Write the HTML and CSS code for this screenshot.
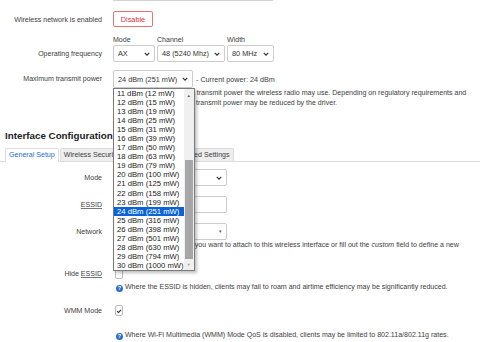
FILE: index.html
```html
<!DOCTYPE html>
<html lang="en">
<head>
    <meta charset="UTF-8">
    <title>Wireless - Device Configuration</title>
    <link rel="stylesheet" href="styles.css">
</head>
<body>

    <!-- end of the previous field -->
    <div class="prev-field"></div>

    <!-- Enabled -->
    <div class="row row-enabled">
        <label class="label">Wireless network is enabled</label>
        <div class="field">
            <button class="btn-disable">Disable</button>
        </div>
    </div>

    <!-- Operating frequency -->
    <div class="row row-freq">
        <label class="label">Operating frequency</label>
        <div class="field freq">
            <div class="freq-col">
                <span class="sub">Mode</span>
                <div class="select w-mode">AX <svg class="chev" viewBox="0 0 8 5"><path d="M1 1l3 3 3-3"/></svg></div>
            </div>
            <div class="freq-col">
                <span class="sub">Channel</span>
                <div class="select w-channel">48 (5240 Mhz) <svg class="chev" viewBox="0 0 8 5"><path d="M1 1l3 3 3-3"/></svg></div>
            </div>
            <div class="freq-col">
                <span class="sub">Width</span>
                <div class="select w-width">80 MHz <svg class="chev" viewBox="0 0 8 5"><path d="M1 1l3 3 3-3"/></svg></div>
            </div>
        </div>
    </div>

    <!-- Transmit power -->
    <div class="row row-power">
        <label class="label">Maximum transmit power</label>
        <div class="field power">
            <div class="power-line">
                <div class="select w-power">24 dBm (251 mW) <svg class="chev" viewBox="0 0 8 5"><path d="M1 1l3 3 3-3"/></svg></div>
                <span class="current">- Current power: 24 dBm</span>
            </div>
            <div class="help">
                <span class="qmark">?</span> Specifies the maximum transmit power the wireless radio may use. Depending on regulatory requirements and<br>
                wireless usage, the actual transmit power may be reduced by the driver.
            </div>

            <!-- open dropdown list -->
            <div class="dropdown">
                <ul class="options">
                    <li>11 dBm (12 mW)</li>
                    <li>12 dBm (15 mW)</li>
                    <li>13 dBm (19 mW)</li>
                    <li>14 dBm (25 mW)</li>
                    <li>15 dBm (31 mW)</li>
                    <li>16 dBm (39 mW)</li>
                    <li>17 dBm (50 mW)</li>
                    <li>18 dBm (63 mW)</li>
                    <li>19 dBm (79 mW)</li>
                    <li>20 dBm (100 mW)</li>
                    <li>21 dBm (125 mW)</li>
                    <li>22 dBm (158 mW)</li>
                    <li>23 dBm (199 mW)</li>
                    <li class="selected">24 dBm (251 mW)</li>
                    <li>25 dBm (316 mW)</li>
                    <li>26 dBm (398 mW)</li>
                    <li>27 dBm (501 mW)</li>
                    <li>28 dBm (630 mW)</li>
                    <li>29 dBm (794 mW)</li>
                    <li>30 dBm (1000 mW)</li>
                </ul>
                <div class="scrollbar">
                    <span class="arrow up">&#9650;</span>
                    <div class="thumb"></div>
                    <span class="arrow down">&#9660;</span>
                </div>
            </div>
        </div>
    </div>

    <!-- Interface Configuration -->
    <h3 class="section-title">Interface Configuration</h3>
    <ul class="tabs">
        <li class="tab active">General Setup</li>
        <li class="tab">Wireless Security</li>
        <li class="tab">MAC-Filter</li>
        <li class="tab">Advanced Settings</li>
    </ul>

    <div class="row row-mode">
        <label class="label">Mode</label>
        <div class="field">
            <div class="select w-full">Access Point <svg class="chev" viewBox="0 0 8 5"><path d="M1 1l3 3 3-3"/></svg></div>
        </div>
    </div>

    <div class="row row-essid">
        <label class="label"><abbr>ESSID</abbr></label>
        <div class="field">
            <div class="input w-full">OpenWrt</div>
        </div>
    </div>

    <div class="row row-network">
        <label class="label">Network</label>
        <div class="field">
            <div class="select w-full">lan: <span class="tri">&#9662;</span></div>
        </div>
    </div>
    <div class="help help-network">
        <span class="qmark">?</span> Choose the network(s) you want to attach to this wireless interface or fill out the <em>custom</em> field to define a new
    </div>

    <div class="row row-hide">
        <label class="label">Hide <abbr>ESSID</abbr></label>
        <div class="field">
            <span class="checkbox"></span>
        </div>
    </div>
    <div class="help help-row">
        <span class="qmark">?</span> Where the ESSID is hidden, clients may fail to roam and airtime efficiency may be significantly reduced.
    </div>

    <div class="row row-wmm">
        <label class="label">WMM Mode</label>
        <div class="field">
            <span class="checkbox checked"><svg viewBox="0 0 8 8"><path d="M1.5 4.2l1.8 1.8 3.4-3.6"/></svg></span>
        </div>
    </div>
    <div class="help help-row help-wmm">
        <span class="qmark">?</span> Where Wi-Fi Multimedia (WMM) Mode QoS is disabled, clients may be limited to 802.11a/802.11g rates.
    </div>

</body>
</html>
```

FILE: styles.css
```css
/* Reset */
* {
    margin: 0;
    padding: 0;
    box-sizing: border-box;
}

body {
    background: #fff;
    color: #333;
    font-family: 'Liberation Sans', Arial, sans-serif;
    font-size: 7.05px;
    line-height: 9px;
    overflow: hidden;
}

.prev-field {
    width: 160px;
    height: 1px;
    margin-left: 113px;
    background: #d4d4d4;
}

/* Form rows */
.row {
    display: flex;
    align-items: center;
}

.label {
    width: 102px;
    text-align: right;
    color: #404040;
    flex-shrink: 0;
}

.field {
    margin-left: 11px;
    position: relative;
}

abbr {
    text-decoration: underline;
    text-decoration-color: #777;
}

.row-enabled { margin-top: 10px; }
.row-freq { margin-top: 8px; align-items: flex-end; }
.row-freq .label { padding-bottom: 4px; }
.row-power { margin-top: 8px; align-items: flex-start; }
.row-power .label { padding-top: 4px; }
.row-mode { margin-top: 7px; }
.row-essid { margin-top: 10px; }
.row-network { margin-top: 10px; }
.row-hide { margin-top: 18px; }
.row-wmm { margin-top: 13px; }

/* Buttons and inputs */
.btn-disable {
    width: 40px;
    height: 16px;
    border: 1px solid #e57373;
    border-radius: 2px;
    background: #fff;
    color: #d9363e;
    font: inherit;
    font-size: 7.3px;
}

.freq {
    display: flex;
    gap: 2px;
}

.freq-col {
    display: flex;
    flex-direction: column;
}

.sub {
    height: 10px;
    line-height: 10px;
    color: #404040;
}

.select,
.input {
    height: 17px;
    border: 1px solid #ccc;
    border-radius: 2px;
    background: #fff;
    display: flex;
    align-items: center;
    padding: 0 4px;
    color: #333;
    font-size: 7.3px;
}

.select .chev {
    width: 6px;
    height: 4px;
    margin-left: auto;
    fill: none;
    stroke: #333;
    stroke-width: 1.6;
}

.w-mode { width: 42px; }
.w-channel { width: 68px; }
.w-width { width: 47px; }
.w-power { width: 80px; height: 18px; }
.w-full { width: 114px; }

.input { color: #fff; }

.tri {
    margin-left: auto;
    font-size: 5px;
    color: #555;
}

.power-line {
    display: flex;
    align-items: center;
}

.current {
    margin-left: 3px;
    color: #404040;
    font-size: 7.2px;
}

/* Help texts */
.help {
    color: #404040;
    white-space: nowrap;
}

.qmark {
    display: inline-block;
    width: 7px;
    height: 7px;
    border-radius: 50%;
    background: #2a6fc9;
    color: #fff;
    font-size: 5.5px;
    font-weight: bold;
    line-height: 7px;
    text-align: center;
    vertical-align: -1px;
}

.help-network {
    margin: 0 0 0 113px;
}

.help-row {
    margin: 3px 0 0 116px;
}

.help-wmm { margin-top: 14px; }

/* Checkboxes */
.checkbox {
    display: flex;
    align-items: center;
    justify-content: center;
    width: 8px;
    height: 11px;
    margin-left: 2px;
    border: 1px solid #bbb;
    border-radius: 2px;
    background: #fff;
}

.checkbox svg {
    width: 6px;
    height: 6px;
    fill: none;
    stroke: #222;
    stroke-width: 1.4;
}

/* Section heading and tabs */
.section-title {
    margin: 23px 0 0 5px;
    font-size: 9.8px;
    line-height: 12px;
    font-weight: bold;
    color: #222;
}

.tabs {
    list-style: none;
    display: flex;
    gap: 1px;
    margin-top: 6px;
    padding-left: 5px;
    border-bottom: 1px solid #ddd;
}

.tab {
    height: 13px;
    line-height: 12px;
    padding: 0 3px;
    border: 1px solid #ddd;
    border-bottom: none;
    border-radius: 2px 2px 0 0;
    background: #eee;
    color: #404040;
    margin-bottom: -1px;
    font-size: 7.1px;
}

.tab.active {
    background: #fff;
    color: #1a6fc9;
    height: 14px;
}

/* Open dropdown list */
.dropdown {
    position: absolute;
    top: 18px;
    left: 0;
    width: 82px;
    height: 183px;
    border: 1px solid #7a7a7a;
    background: #fff;
    box-shadow: 2px 2px 3px rgba(0, 0, 0, 0.25);
    display: flex;
    z-index: 10;
}

.options {
    list-style: none;
    flex: 1;
}

.options li {
    height: 9.05px;
    line-height: 9.05px;
    padding-left: 3px;
    font-size: 7.7px;
    color: #222;
    white-space: nowrap;
}

.options li.selected {
    background: #0a64d6;
    color: #fff;
}

.scrollbar {
    width: 11px;
    background: #f0f0f0;
    position: relative;
}

.scrollbar .thumb {
    position: absolute;
    top: 71px;
    left: 1px;
    right: 1px;
    height: 99px;
    background: #a6a6a6;
}

.scrollbar .arrow {
    position: absolute;
    left: 0;
    right: 0;
    text-align: center;
    font-size: 4px;
    color: #505050;
}

.scrollbar .up { top: 2px; }
.scrollbar .down { bottom: 1px; color: #999; }
```
